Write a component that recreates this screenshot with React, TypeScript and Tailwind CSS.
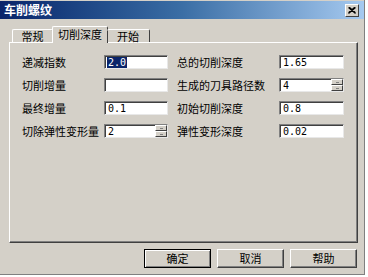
import React from 'react';

const cjk = { fontFamily: '"Noto Sans CJK SC", "Noto Sans CJK TC", sans-serif' };

interface FieldProps {
  label: string;
  value?: string;
  selected?: boolean;
  spin?: boolean;
  labelWidth: string;
  inputWidth: string;
}

function SpinButtons() {
  return (
    <div className="w-[12px] h-full flex flex-col">
      <div className="flex-1 bg-[#d4d0c8] border-t border-l border-t-white border-l-white border-r border-b border-r-[#404040] border-b-[#404040] flex items-center justify-center">
        <div className="w-[3px] h-px bg-[#808080]" />
      </div>
      <div className="flex-1 bg-[#d4d0c8] border-t border-l border-t-white border-l-white border-r border-b border-r-[#404040] border-b-[#404040] flex items-center justify-center">
        <div className="w-[3px] h-px bg-[#808080]" />
      </div>
    </div>
  );
}

function Field({ label, value, selected, spin, labelWidth, inputWidth }: FieldProps) {
  return (
    <div className="flex items-center h-[14px]">
      <span className={`${labelWidth} text-[11px] leading-none text-black whitespace-nowrap`}>{label}</span>
      <div
        className={`${inputWidth} h-[14px] bg-white flex items-center border-t border-l border-t-[#808080] border-l-[#808080] border-r border-b border-r-[#e8e8e8] border-b-[#e8e8e8] shadow-[inset_1px_1px_0_#404040]`}
      >
        <div className="flex-1 h-full flex items-center pl-[2px] overflow-hidden">
          {value && (
            <span
              className={`text-[10px] leading-[11px] px-px ${selected ? 'bg-[#0a246a] text-white' : 'text-black'}`}
              style={{ fontFamily: '"DejaVu Sans Mono", monospace' }}
            >
              {value}
            </span>
          )}
        </div>
        {spin && <SpinButtons />}
      </div>
    </div>
  );
}

function Button({ label, isDefault }: { label: string; isDefault?: boolean }) {
  return (
    <button
      className={`w-[67px] h-[19px] bg-[#d4d0c8] flex items-center justify-center text-[11px] leading-none text-black ${
        isDefault
          ? 'border border-black shadow-[inset_1px_1px_0_#ffffff,inset_-1px_-1px_0_#808080]'
          : 'border-t border-l border-t-white border-l-white border-r border-b border-r-[#404040] border-b-[#404040] shadow-[inset_-1px_-1px_0_#808080]'
      }`}
    >
      {label}
    </button>
  );
}

export default function App() {
  return (
    <div className="w-[368px] h-[277px] bg-white overflow-hidden" style={cjk}>
      <div className="w-[365px] h-[275px] bg-[#d4d0c8] border-r border-b border-r-[#808080] border-b-[#808080] flex flex-col">
        <div className="h-[18px] mt-px flex items-center justify-between bg-gradient-to-r from-[#0a246a] via-[#3a6ea5] to-[#a6caf0] pl-[4px] pr-[5px]">
          <span className="text-white font-bold text-[12px] leading-none">车削螺纹</span>
          <div className="w-[14px] h-[13px] bg-[#d4d0c8] border-t border-l border-t-white border-l-white border-r border-b border-r-[#404040] border-b-[#404040] flex items-center justify-center">
            <svg width="8" height="7" viewBox="0 0 8 7">
              <path d="M0.5 0.5 L7.5 6.5 M1.5 0.5 L7.5 5.8 M7.5 0.5 L0.5 6.5 M6.5 0.5 L0.5 5.8" stroke="#000" strokeWidth="1.2" />
            </svg>
          </div>
        </div>

        <div className="pl-[9px] pt-[7px] flex flex-col">
          <div className="flex items-end h-[16px] pl-[3px] relative z-10">
            <div className="w-[41px] h-[13px] border-t border-l border-t-white border-l-white border-r border-r-[#404040] rounded-t-[2px] flex items-center justify-center text-[11px] leading-none">
              常规
            </div>
            <div className="w-[56px] h-[17px] -mb-px -mx-[1px] bg-[#d4d0c8] border-t border-l border-t-white border-l-white border-r border-r-[#404040] rounded-t-[2px] flex items-start pt-[2px] justify-center text-[11px] leading-none">
              切削深度
            </div>
            <div className="w-[43px] h-[13px] border-t border-t-white border-r border-r-[#404040] rounded-t-[2px] flex items-center justify-center text-[11px] leading-none">
              开始
            </div>
          </div>

          <div className="w-[349px] h-[201px] border-t border-l border-t-white border-l-white border-r border-b border-r-[#404040] border-b-[#404040] shadow-[inset_-1px_-1px_0_#808080] pl-[12px] pt-[12px]">
            <div className="grid grid-cols-[146px_167px] gap-x-[9px] gap-y-[9px]">
              <Field label="递减指数" value="2.0" selected labelWidth="w-[82px]" inputWidth="w-[64px]" />
              <Field label="总的切削深度" value="1.65" labelWidth="w-[102px]" inputWidth="w-[65px]" />
              <Field label="切削增量" labelWidth="w-[82px]" inputWidth="w-[64px]" />
              <Field label="生成的刀具路径数" value="4" spin labelWidth="w-[102px]" inputWidth="w-[65px]" />
              <Field label="最终增量" value="0.1" labelWidth="w-[82px]" inputWidth="w-[64px]" />
              <Field label="初始切削深度" value="0.8" labelWidth="w-[102px]" inputWidth="w-[65px]" />
              <Field label="切除弹性变形量" value="2" spin labelWidth="w-[82px]" inputWidth="w-[64px]" />
              <Field label="弹性变形深度" value="0.02" labelWidth="w-[102px]" inputWidth="w-[65px]" />
            </div>
          </div>

          <div className="w-[349px] pt-[6px] pr-[1px] flex justify-end gap-[6px]">
            <Button label="确定" isDefault />
            <Button label="取消" />
            <Button label="帮助" />
          </div>
        </div>
      </div>
    </div>
  );
}
